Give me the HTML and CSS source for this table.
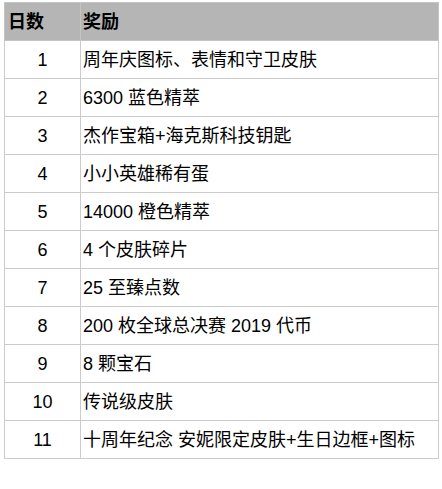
FILE: index.html
```html
<!DOCTYPE html>
<html lang="zh">
<head>
<meta charset="utf-8">
<title>奖励</title>
<link rel="stylesheet" href="styles.css">
</head>
<body>
<table class="rewards">
  <thead>
    <tr><th class="day">日数</th><th class="prize">奖励</th></tr>
  </thead>
  <tbody>
    <tr><td class="day">1</td><td class="prize">周年庆图标、表情和守卫皮肤</td></tr>
    <tr><td class="day">2</td><td class="prize">6300 蓝色精萃</td></tr>
    <tr><td class="day">3</td><td class="prize">杰作宝箱+海克斯科技钥匙</td></tr>
    <tr><td class="day">4</td><td class="prize">小小英雄稀有蛋</td></tr>
    <tr><td class="day">5</td><td class="prize">14000 橙色精萃</td></tr>
    <tr><td class="day">6</td><td class="prize">4 个皮肤碎片</td></tr>
    <tr><td class="day">7</td><td class="prize">25 至臻点数</td></tr>
    <tr><td class="day">8</td><td class="prize">200 枚全球总决赛 2019 代币</td></tr>
    <tr><td class="day">9</td><td class="prize">8 颗宝石</td></tr>
    <tr><td class="day">10</td><td class="prize">传说级皮肤</td></tr>
    <tr><td class="day">11</td><td class="prize">十周年纪念 安妮限定皮肤+生日边框+图标</td></tr>
  </tbody>
</table>
</body>
</html>
```
FILE: styles.css
```css
body {
  margin: 2px 0 0 4px;
  background: #ffffff;
  font-family: "Liberation Sans", "Noto Sans CJK SC", sans-serif;
  font-size: 18px;
  color: #000;
}
.rewards {
  border-collapse: collapse;
  width: 435px;
  table-layout: fixed;
}
.rewards th,
.rewards td {
  border: 1px solid #cccccc;
  height: 37px;
  padding: 0 2px;
  line-height: 20px;
  vertical-align: middle;
}
.rewards th {
  background: #b5b5b5;
  font-weight: bold;
  text-align: left;
  border-color: #c4c4c4;
}
.rewards th.day {
  width: 70px;
  padding-left: 3px;
}
.rewards td.day {
  text-align: center;
}
.rewards td.prize {
  text-align: left;
}
```
